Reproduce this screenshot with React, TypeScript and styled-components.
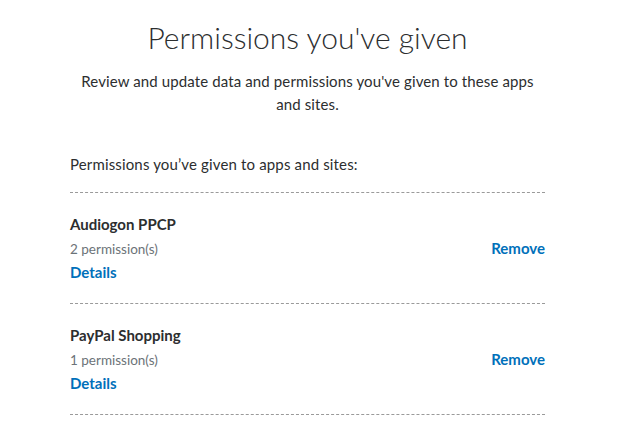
import React from "react";
import styled, { createGlobalStyle } from "styled-components";

const GlobalStyle = createGlobalStyle`
  body {
    margin: 0;
    background: #fff;
    font-family: Lato, "Noto Sans", Arial, sans-serif;
    color: #2c2e2f;
  }
`;

const Page = styled.div`
  width: 475px;
  margin-left: 70px;
  padding-top: 17px;
`;

const Header = styled.div`
  text-align: center;
  padding: 0 4px;
`;

const Title = styled.h1`
  margin: 0;
  font-size: 30px;
  line-height: 40px;
  font-weight: 300;
  color: #2c2e2f;
`;

const Lead = styled.p`
  margin: 13px 0 0;
  font-size: 15px;
  line-height: 23px;
  letter-spacing: 0.12px;
`;

const SectionLabel = styled.p`
  margin: 37px 0 0;
  font-size: 15px;
  line-height: 22px;
  letter-spacing: 0.15px;
  padding-bottom: 17px;
  border-bottom: 1px dashed #9a9a9a;
`;

const List = styled.ul`
  list-style: none;
  margin: 0;
  padding: 0;
`;

const Item = styled.li`
  display: flex;
  align-items: center;
  justify-content: space-between;
  padding: 20px 0 20px;
  border-bottom: 1px dashed #9a9a9a;
`;

const Info = styled.div`
  display: flex;
  flex-direction: column;
`;

const AppName = styled.span`
  font-size: 15px;
  font-weight: 700;
  line-height: 22px;
`;

const Count = styled.span`
  margin-top: 4px;
  font-size: 13.5px;
  line-height: 20px;
  color: #6c7378;
`;

const Link = styled.a`
  font-size: 15px;
  font-weight: 700;
  line-height: 22px;
  color: #0070ba;
  text-decoration: none;
  cursor: pointer;
`;

const DetailsLink = styled(Link)`
  margin-top: 2px;
`;

const apps = [
  { name: "Audiogon PPCP", count: 2 },
  { name: "PayPal Shopping", count: 1 },
];

export default function App() {
  return (
    <>
      <GlobalStyle />
      <Page>
        <Header>
          <Title>Permissions you've given</Title>
          <Lead>
            Review and update data and permissions you've given to these apps
            and sites.
          </Lead>
        </Header>
        <SectionLabel>Permissions you’ve given to apps and sites:</SectionLabel>
        <List>
          {apps.map((app) => (
            <Item key={app.name}>
              <Info>
                <AppName>{app.name}</AppName>
                <Count>{app.count} permission(s)</Count>
                <DetailsLink>Details</DetailsLink>
              </Info>
              <Link>Remove</Link>
            </Item>
          ))}
        </List>
      </Page>
    </>
  );
}
